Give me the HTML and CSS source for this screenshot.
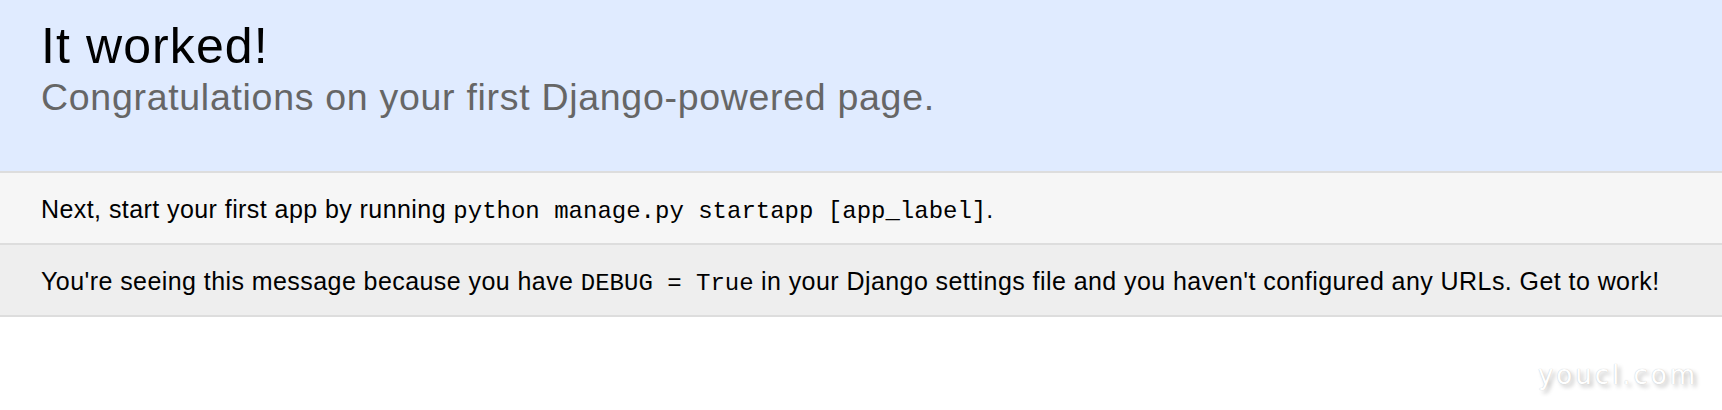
FILE: index.html
```html
<!DOCTYPE html>
<html lang="en">
<head>
    <meta charset="UTF-8">
    <title>Welcome to Django</title>
    <link rel="stylesheet" href="styles.css">
</head>
<body>
    <div class="summary">
        <h1>It worked!</h1>
        <h2>Congratulations on your first Django-powered page.</h2>
    </div>

    <div class="instructions">
        <p>Next, start your first app by running <code>python manage.py startapp [app_label]</code>.</p>
    </div>

    <div class="explanation">
        <p>You're seeing this message because you have <code>DEBUG = True</code> in your Django settings file and you haven't configured any URLs. Get to work!</p>
    </div>

    <div class="watermark">youcl.com</div>
</body>
</html>
```

FILE: styles.css
```css
html, body, h1, h2, p {
    margin: 0;
    padding: 0;
}
body {
    font-family: "Liberation Sans", Arial, sans-serif;
    font-size: 25px;
    color: black;
    background: white;
    height: 410px;
    position: relative;
    overflow: hidden;
}
.summary,
.instructions,
.explanation {
    border-bottom: 2px solid #ddd;
    padding: 19px 41px 17px;
}
.summary {
    background: #e0ebff;
}
h1 {
    font-size: 50px;
    font-weight: normal;
    line-height: 55px;
    letter-spacing: 1.1px;
}
h2 {
    font-size: 37.5px;
    font-weight: normal;
    color: #666;
    line-height: 41px;
    letter-spacing: 0.7px;
    margin-top: 3px;
    margin-bottom: 36px;
}
.instructions {
    background: #f6f6f6;
}
.explanation {
    background: #eee;
}
p {
    line-height: 34px;
    letter-spacing: 0.43px;
}
code {
    font-family: "Liberation Mono", "Courier New", monospace;
    font-size: 24px;
    line-height: 1;
    letter-spacing: 0;
}
.watermark {
    position: absolute;
    right: 24px;
    bottom: 20px;
    font-family: "DejaVu Sans", Verdana, sans-serif;
    font-size: 26px;
    letter-spacing: 3px;
    color: white;
    text-shadow: 0 0 1px #bbb, 3px 3px 4px rgba(0, 0, 0, 0.25);
}
```
